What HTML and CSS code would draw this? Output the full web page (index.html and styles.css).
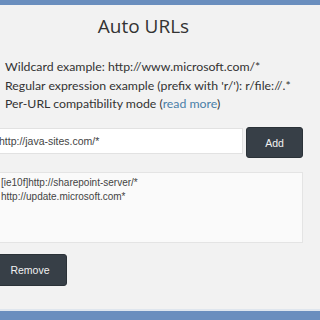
FILE: index.html
```html
<!DOCTYPE html>
<html>
<head>
<meta charset="utf-8">
<link rel="stylesheet" href="styles.css">
</head>
<body>
<div class="topbar"></div>
<main class="page">
  <h1 class="title">Auto URLs</h1>
  <div class="info">
    <div>Wildcard example: http://www.microsoft.com/*</div>
    <div>Regular expression example (prefix with 'r/'): r/file://.*</div>
    <div>Per-URL compatibility mode (<a class="link" href="#">read more</a>)</div>
  </div>
  <div class="addrow">
    <input class="url" type="text" value="http://java-sites.com/*">
    <button class="btn add">Add</button>
  </div>
  <textarea class="list">[ie10f]http://sharepoint-server/*
http://update.microsoft.com*</textarea>
  <button class="btn remove">Remove</button>
</main>
<div class="bottombar"></div>
</body>
</html>
```
FILE: styles.css
```css
html, body { margin: 0; padding: 0; }
body {
  width: 320px;
  height: 320px;
  overflow: hidden;
  background: #f2f2f2;
  font-family: "Open Sans", sans-serif;
  color: #333;
  display: flex;
  flex-direction: column;
}
.topbar { height: 5px; background: #6a8ebe; flex: none; }
.bottombar { height: 9px; background: #6a8ebe; border-top: 2px solid #dfe6ee; flex: none; margin-top: auto; }
.page { padding: 0 17px 0 0; margin-left: -12px; display: flex; flex-direction: column; }
.title {
  margin: 8px 0 0;
  font-weight: 400;
  font-size: 19px;
  line-height: 26px;
  text-align: center;
  color: #333;
  padding-left: 0;
  padding-right: 4px;
}
.info {
  margin: 19px 0 0 17px;
  font-family: Lato, "Open Sans", sans-serif;
  font-size: 12.3px;
  line-height: 18.5px;
  color: #333;
  white-space: nowrap;
}
.link { color: #4a7fa8; text-decoration: none; }
.addrow { display: flex; gap: 3px; margin-top: 13.5px; align-items: flex-start; }
.url {
  flex: 1;
  height: 26px;
  box-sizing: border-box;
  margin-top: 1px;
  border: 1px solid #e2e2e2;
  background: #fff;
  font-family: "Liberation Sans", Arial, sans-serif;
  font-size: 10.5px;
  color: #444;
  padding: 0 10px;
  outline: none;
}
.btn {
  background: #373f47;
  color: #f2f2f2;
  border: 1px solid #2b3238;
  border-radius: 3px;
  font-family: "Liberation Sans", Arial, sans-serif;
  font-size: 10.5px;
}
.add { width: 57px; height: 31px; }
.list {
  margin-top: 14px;
  height: 71px;
  box-sizing: border-box;
  border: 1px solid #e4e4e4;
  background: #fafafa;
  font-family: "Liberation Sans", Arial, sans-serif;
  font-size: 10px;
  line-height: 14px;
  color: #444;
  padding: 3px 10px 3px 12px;
  resize: none;
  overflow-y: scroll;
  outline: none;
}
.remove { width: 74px; height: 32px; margin-top: 11px; margin-left: 5px; align-self: flex-start; }
```
